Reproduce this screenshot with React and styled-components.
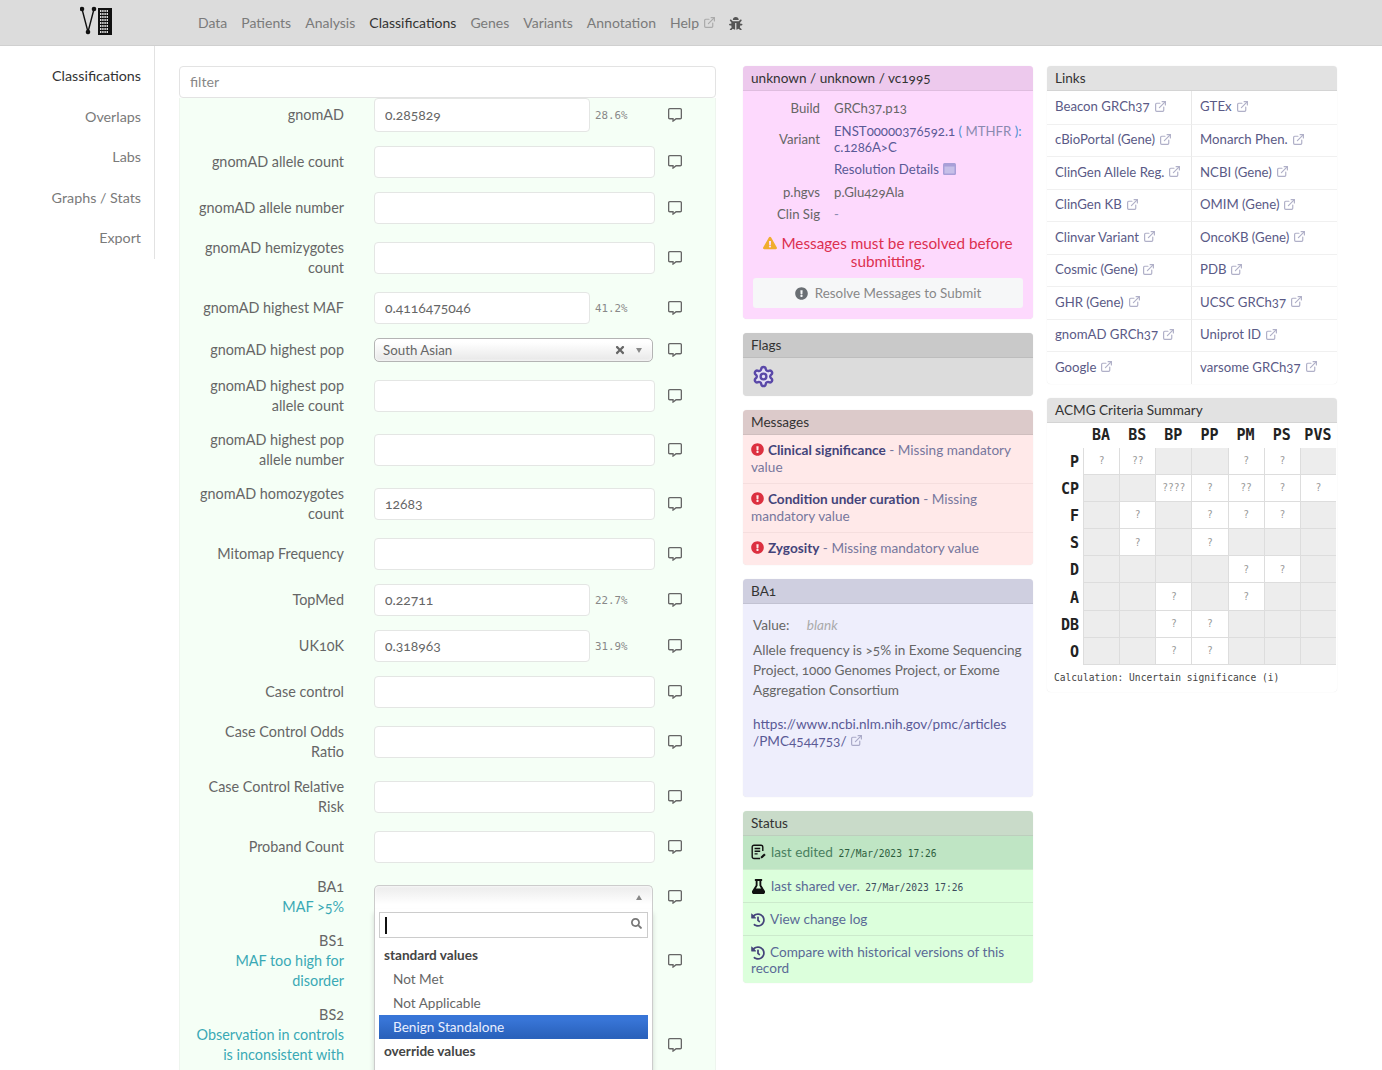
import React from 'react';
import styled, { createGlobalStyle } from 'styled-components';
import { ExternalLink, Settings } from 'lucide-react';
import { FaRegCommentAlt, FaBug, FaExclamationTriangle, FaExclamationCircle, FaFlask, FaHistory, FaSearch, FaTimes } from 'react-icons/fa';

const Global = createGlobalStyle`
  html, body { margin: 0; padding: 0; background: #fff; }
  body { font-family: Lato, "Open Sans", sans-serif; font-size: 14px; color: #666; font-variant-numeric: oldstyle-nums; font-feature-settings: "onum"; }
  * { box-sizing: border-box; }
`;

const Page = styled.div`height: 1070px; overflow: hidden; display: flex; flex-direction: column;`;
const Header = styled.header`
  height: 46px; flex: none; background: #dcdcdc; border-bottom: 1px solid #d0d0d0;
  display: flex; align-items: center; padding-left: 80px;
`;
const LogoWrap = styled.svg`width: 34px; height: 32px; margin-right: 84px; margin-top: -3px; flex: none;`;
const Nav = styled.nav`display: flex; align-items: center; gap: 14px; font-size: 14px;`;
const NavItem = styled.span`
  color: ${p => (p.$active ? '#333' : '#7a7a7a')};
  display: inline-flex; align-items: center; gap: 4px;
  svg { color: #aaa; }
`;
const BugIcon = styled(FaBug)`color: #555; font-size: 13.5px; margin: 2px 0 0 -1px;`;

const Body = styled.div`flex: 1; display: flex; min-height: 0;`;
const Side = styled.aside`
  width: 155px; height: 213px; flex: none; border-right: 1px solid #e2e2e2;
  display: flex; flex-direction: column; align-items: flex-end; padding: 20px 13px 0 0; gap: 20.5px;
`;
const SideItem = styled.div`line-height: 20px; font-size: 14.3px; color: ${p => (p.$active ? '#333' : '#7a7a7a')};`;

const Main = styled.main`
  flex: 1; display: grid; grid-template-columns: 537px 290px 290px; padding: 20px 0 0 24px; min-height: 0; align-items: start;
`;
const FormCol = styled.div``;
const Filter = styled.div`
  height: 32px; border: 1px solid #e3e3e3; border-radius: 4px; background: #fff; color: #888; padding: 0 10px 1px;
  display: flex; align-items: center; font-size: 14.2px;
`;
const FormPanel = styled.div`background: #f5fff6; border: 1px solid #eef5ee; border-top: 0; height: 1000px;`;
const Row = styled.div`
  display: grid; grid-template-columns: 164px 281px 14px; align-items: center; margin-bottom: ${p => p.$mb || 14}px;
`;
const Label = styled.div`
  text-align: right; line-height: 20px; font-size: 14.4px; color: #666; padding-bottom: ${p => p.$pb || 0}px;
`;
const Help = styled.span`color: #3aa9b5;`;
const ControlCell = styled.div`margin-left: 30px; width: 281px; display: flex; align-items: center; position: relative;`;
const Input = styled.input`
  width: ${p => (p.$short ? '216px' : '281px')}; height: ${p => p.$h || 32}px; flex: none;
  border: 1px solid #e4e6e4; border-radius: 4px; background: #fff; padding: 0 10px 1px;
  font: inherit; font-size: 13.9px; color: #666; outline: none; font-variant-numeric: oldstyle-nums; font-feature-settings: "onum";
`;
const Pct = styled.span`margin-left: 5px; font: 10.8px "DejaVu Sans Mono", monospace; color: #888;`;
const CommentBtn = styled.div`
  margin-left: 43px; width: 14px; height: 16px; color: #666; display: flex; align-items: center; justify-content: center; font-size: 14px;
`;
const Chosen = styled.div`
  width: 279px; height: 24px; flex: none; border: 1px solid #b4b4b4; border-radius: 5px;
  background: linear-gradient(#fff 15%, #eaeaea 90%); padding: 0 8px; font-size: 13.3px; color: #666;
  display: flex; align-items: center; box-shadow: 0 0 3px #fff inset;
  ${p => p.$open && `
    background: linear-gradient(#eee 10%, #fff 80%); border-color: #ccc; border-bottom: 0; border-radius: 5px 5px 0 0;
  `}
`;
const ChosenText = styled.span`flex: 1;`;
const ClearX = styled(FaTimes)`color: #666; font-size: 12px; margin-right: 10px;`;
const Arrow = styled.span`
  width: 0; height: 0; border-left: 3px solid transparent; border-right: 3px solid transparent; margin-right: 2px;
  ${p => (p.$up ? 'border-bottom: 5px solid #888;' : 'border-top: 5px solid #888;')}
`;
const Drop = styled.div`
  position: absolute; left: 0; top: 24px; width: 279px; height: 300px; background: #fff; border: 1px solid #ccc; border-top: 0;
  box-shadow: 0 4px 5px rgba(0,0,0,.15); padding: 3px 4px; z-index: 5; font-size: 13.6px; color: #666;
`;
const SearchBox = styled.div`
  height: 26px; border: 1px solid #ccc; background: #fff; display: flex; align-items: center; justify-content: space-between; padding: 0 5px;
  svg { color: #777; font-size: 11px; margin-top: -4px; }
  margin-bottom: 5px;
`;
const Caret = styled.span`display: block; width: 2px; height: 17px; background: #111;`;
const OptGroup = styled.div`height: 24px; line-height: 24px; font-weight: 700; padding-left: 5px; color: #444;`;
const Opt = styled.div`
  height: 24px; line-height: 24px; padding-left: 14px;
  ${p => p.$sel && 'background: linear-gradient(#3875d7 20%, #2a62bc 90%); color: #e8eeff;'}
`;

const RightCol = styled.div`display: flex; flex-direction: column; gap: 14px;`;
const MidCol = styled(RightCol)`margin-left: 27px; width: 290px;`;
const LinksCol = styled(RightCol)`margin-left: 41px; width: 290px;`;
const Card = styled.section`
  border-radius: 4px; overflow: hidden; background: ${p => p.$bg || '#fff'}; box-shadow: 0 0 1px rgba(0,0,0,.12);
`;
const CardHead = styled.div`
  height: 25px; background: ${p => p.$bg}; color: #333; padding: 0 8px; display: flex; align-items: center; font-size: 13.6px;
  border-bottom: 1px solid rgba(0,0,0,.06);
`;
const Facts = styled.div`display: grid; grid-template-columns: 77px 1fr; column-gap: 14px; align-items: center; padding: 9px 0 0 0; font-size: 13.2px; row-gap: 6.5px;`;
const FactLabel = styled.div`text-align: right; color: #666;`;
const FactVal = styled.div`color: ${p => (p.$link ? '#5a5a96' : '#666')}; line-height: 16px; white-space: nowrap;`;
const Mute = styled.span`color: #8a8ab0;`;
const Blue = styled.span`color: #4a8fd0;`;
const WindowGlyph = styled.svg`width: 13px; height: 12px; vertical-align: -1px; margin-left: 4px;`;
const Warn = styled.div`
  color: #dc3050; text-align: center; font-size: 15.3px; line-height: 18px; padding: 12px 10px 8px;
`;
const WarnIcon = styled(FaExclamationTriangle)`color: #f0ad2e; font-size: 14px; vertical-align: -1px; margin-right: 4px;`;
const SubmitBtn = styled.div`
  margin: 0 10px 11px; height: 30px; background: #f6f7f8; border-radius: 3px; color: #888; font-size: 13.4px;
  display: flex; align-items: center; justify-content: center; gap: 7px;
  svg { color: #6a6f74; font-size: 13px; }
`;
const FlagsBody = styled.div`height: 38px; padding: 7px 9px; color: #5a48a8; display: flex; align-items: flex-start;`;
const MsgRow = styled.div`
  padding: 7px 8px 8px; line-height: 16.5px; font-size: 13.6px; color: #77779d;
  border-top: ${p => (p.$first ? '0' : '1px solid #f5dede')};
`;
const MsgIcon = styled(FaExclamationCircle)`color: #dc3040; font-size: 13px; vertical-align: -1px; margin-right: 4px;`;
const MsgStrong = styled.strong`color: #44447a; font-weight: 700;`;
const Ba1Body = styled.div`padding: 11px 10px 0; font-size: 13.6px; line-height: 20px; color: #666; height: 193px;`;
const Blank = styled.em`color: #aaa; margin-left: 14px;`;
const Para = styled.p`margin: 5px 0 16px;`;
const ParaLink = styled.div`color: #5a5a96; line-height: 17px; svg { color: #aaaac8; vertical-align: -1px; }`;
const StatusRow = styled.div`
  padding: 8px 8px 7px; line-height: 16px; font-size: 13.6px; min-height: 33px; color: #5a6a96;
  border-top: ${p => (p.$first ? '0' : '1px solid #cceacc')};
  background: ${p => (p.$hi ? '#bfe5c4' : 'transparent')};
  ${p => p.$hi && 'color: #4a8060;'}
`;
const Stamp = styled.span`font: 9.6px "DejaVu Sans Mono", monospace; color: #3d4d5d; margin-left: 2px; ${p => p.$hi && 'color:#2d5d3d;'}`;
const StatusIcon = styled.span`display: inline-flex; vertical-align: -3px; margin-right: 5px; color: ${p => p.$c || '#44447a'}; font-size: ${p => p.$size || 14}px;`;

const LinksGrid = styled.div`display: grid; grid-template-columns: 145px 145px;`;
const LinkCell = styled.div`
  height: 32.5px; display: flex; align-items: center; padding: 0 8px 2px; gap: 4px; color: #5a5a86; font-size: 13.2px;
  border-top: ${p => (p.$top ? '0' : '1px solid #f0f0f0')};
  border-right: ${p => (p.$left ? '1px solid #e8e8e8' : '0')};
  svg { color: #b0b0c8; flex: none; }
`;

const Acmg = styled.div`
  display: grid; grid-template-columns: 36px repeat(7, 36.15px); grid-template-rows: 25px repeat(8, 27.2px);
  font-family: "DejaVu Sans Mono", monospace;
`;
const AcmgHead = styled.div`font-weight: 700; font-size: 15px; color: #222; display: flex; align-items: center; justify-content: center;`;
const AcmgRowLabel = styled(AcmgHead)`justify-content: flex-end; padding: 1px 4px 0 0;`;
const AcmgCell = styled.div`
  font-size: 9.6px; color: #999; display: flex; align-items: center; justify-content: center;
  background: ${p => (p.$empty ? '#ededed' : '#fff')}; border-left: 1px solid #ddd; border-bottom: 1px solid #ddd;
`;
const Calc = styled.div`font: 9.6px "DejaVu Sans Mono", monospace; color: #444; padding: 6px 7px 7px; line-height: 14px;`;

const Ext = () => <ExternalLink size={13} strokeWidth={2.2} />;
const Comment = () => <CommentBtn><FaRegCommentAlt /></CommentBtn>;

const rows = [
  { l: ['gnomAD'], v: '0.285829', pct: '28.6%', h: 34 },
  { l: ['gnomAD allele count'] },
  { l: ['gnomAD allele number'] },
  { l: ['gnomAD hemizygotes', 'count'] },
  { l: ['gnomAD highest MAF'], v: '0.4116475046', pct: '41.2%' },
  { l: ['gnomAD highest pop'], select: 'South Asian' },
  { l: ['gnomAD highest pop', 'allele count'] },
  { l: ['gnomAD highest pop', 'allele number'] },
  { l: ['gnomAD homozygotes', 'count'], v: '12683' },
  { l: ['Mitomap Frequency'] },
  { l: ['TopMed'], v: '0.22711', pct: '22.7%' },
  { l: ['UK10K'], v: '0.318963', pct: '31.9%' },
  { l: ['Case control'] },
  { l: ['Case Control Odds', 'Ratio'], mb: 15 },
  { l: ['Case Control Relative', 'Risk'] },
  { l: ['Proband Count'] },
];

const links = [
  ['Beacon GRCh37', 'GTEx'], ['cBioPortal (Gene)', 'Monarch Phen.'], ['ClinGen Allele Reg.', 'NCBI (Gene)'],
  ['ClinGen KB', 'OMIM (Gene)'], ['Clinvar Variant', 'OncoKB (Gene)'], ['Cosmic (Gene)', 'PDB'],
  ['GHR (Gene)', 'UCSC GRCh37'], ['gnomAD GRCh37', 'Uniprot ID'], ['Google', 'varsome GRCh37'],
];

const acmgCols = ['BA', 'BS', 'BP', 'PP', 'PM', 'PS', 'PVS'];
const acmg = [
  ['P', ['?', '??', '', '', '?', '?', '']],
  ['CP', ['', '', '????', '?', '??', '?', '?']],
  ['F', ['', '?', '', '?', '?', '?', '']],
  ['S', ['', '?', '', '?', '', '', '']],
  ['D', ['', '', '', '', '?', '?', '']],
  ['A', ['', '', '?', '', '?', '', '']],
  ['DB', ['', '', '?', '?', '', '', '']],
  ['O', ['', '', '?', '?', '', '', '']],
];

const Logo = () => {
  const xs = [0, 1, 2, 3, 4];
  const ys = [0, 1, 2, 3, 4, 5, 6, 7];
  return (
    <LogoWrap viewBox="0 0 34 32">
      <path d="M2 4 L8 27 L14 4" fill="none" stroke="#111" strokeWidth="1.4" />
      <circle cx="2" cy="4" r="2.3" fill="#111" />
      <circle cx="14" cy="4" r="2.3" fill="#111" />
      <circle cx="8" cy="27" r="2.3" fill="#111" />
      <rect x="18" y="3" width="14" height="27" fill="#111" />
      {xs.flatMap(x => ys.map(y => (
        (x < 4 || y > 3) && <rect key={x + '-' + y} x={20 + x * 2.2} y={5 + y * 3} width="1.4" height="2" fill={x === 4 ? '#111' : '#ddd'} />
      )))}
    </LogoWrap>
  );
};

const EditDoc = () => (
  <svg width="15" height="16" viewBox="0 0 15 16" fill="none" stroke="#111" strokeWidth="1.4">
    <path d="M9 14.5H3a1.8 1.8 0 0 1-1.8-1.8V3A1.8 1.8 0 0 1 3 1.2h7A1.8 1.8 0 0 1 11.8 3v4" />
    <path d="M3.6 4.5h5.6M3.6 7.2h5.6M3.6 9.9h3" />
    <path d="M9.5 14.6l.5-2 3.2-3.2 1.5 1.5-3.2 3.2z" fill="#111" stroke="none" />
  </svg>
);

export default function App() {
  return (
    <Page>
      <Global />
      <Header>
        <Logo />
        <Nav>
          <NavItem>Data</NavItem>
          <NavItem>Patients</NavItem>
          <NavItem>Analysis</NavItem>
          <NavItem $active>Classifications</NavItem>
          <NavItem>Genes</NavItem>
          <NavItem>Variants</NavItem>
          <NavItem>Annotation</NavItem>
          <NavItem>Help <Ext /></NavItem>
          <BugIcon />
        </Nav>
      </Header>
      <Body>
        <Side>
          <SideItem $active>Classifications</SideItem>
          <SideItem>Overlaps</SideItem>
          <SideItem>Labs</SideItem>
          <SideItem>Graphs / Stats</SideItem>
          <SideItem>Export</SideItem>
        </Side>
        <Main>
          <FormCol>
            <Filter>filter</Filter>
            <FormPanel>
              {rows.map(r => (
                <Row key={r.l.join()} $mb={r.mb}>
                  <Label>{r.l.map((t, i) => <React.Fragment key={t}>{i > 0 && <br />}{t}</React.Fragment>)}</Label>
                  <ControlCell>
                    {r.select ? (
                      <Chosen>
                        <ChosenText>{r.select}</ChosenText>
                        <ClearX />
                        <Arrow />
                      </Chosen>
                    ) : (
                      <>
                        <Input readOnly value={r.v || ''} $short={!!r.pct} $h={r.h} />
                        {r.pct && <Pct>{r.pct}</Pct>}
                      </>
                    )}
                  </ControlCell>
                  <Comment />
                </Row>
              ))}
              <Row>
                <Label>BA1<br /><Help>MAF &gt;5%</Help></Label>
                <ControlCell>
                  <Chosen $open>
                    <ChosenText />
                    <Arrow $up />
                  </Chosen>
                  <Drop>
                    <SearchBox><Caret /><FaSearch /></SearchBox>
                    <OptGroup>standard values</OptGroup>
                    <Opt>Not Met</Opt>
                    <Opt>Not Applicable</Opt>
                    <Opt $sel>Benign Standalone</Opt>
                    <OptGroup>override values</OptGroup>
                  </Drop>
                </ControlCell>
                <Comment />
              </Row>
              <Row>
                <Label>BS1<br /><Help>MAF too high for<br />disorder</Help></Label>
                <ControlCell />
                <Comment />
              </Row>
              <Row>
                <Label $pb={20}>BS2<br /><Help>Observation in controls<br />is inconsistent with</Help></Label>
                <ControlCell />
                <Comment />
              </Row>
            </FormPanel>
          </FormCol>

          <MidCol>
            <Card $bg="#fdd9fd">
              <CardHead $bg="#edc9ed">unknown / unknown / vc1995</CardHead>
              <Facts>
                <FactLabel>Build</FactLabel><FactVal>GRCh37.p13</FactVal>
                <FactLabel>Variant</FactLabel>
                <FactVal $link>ENST00000376592.1 <Blue>(</Blue> <Mute>MTHFR</Mute> <Blue>):</Blue><br />c.1286A&gt;C</FactVal>
                <span />
                <FactVal $link>Resolution Details
                  <WindowGlyph viewBox="0 0 13 12"><rect width="13" height="12" rx="1.5" fill="#a99fd8" /><rect x="1.5" y="3.5" width="10" height="7" fill="#c6bfe8" /></WindowGlyph>
                </FactVal>
                <FactLabel>p.hgvs</FactLabel><FactVal>p.Glu429Ala</FactVal>
                <FactLabel>Clin Sig</FactLabel><FactVal><Mute>-</Mute></FactVal>
              </Facts>
              <Warn><WarnIcon />Messages must be resolved before submitting.</Warn>
              <SubmitBtn><FaExclamationCircle /> Resolve Messages to Submit</SubmitBtn>
            </Card>
            <Card $bg="#dcdcdc">
              <CardHead $bg="#c9c9c9">Flags</CardHead>
              <FlagsBody><Settings size={23} strokeWidth={2.5} fill="#e4e0f4" /></FlagsBody>
            </Card>
            <Card $bg="#ffe9e9">
              <CardHead $bg="#dccaca">Messages</CardHead>
              <MsgRow $first><MsgIcon /><MsgStrong>Clinical significance</MsgStrong> - Missing mandatory value</MsgRow>
              <MsgRow><MsgIcon /><MsgStrong>Condition under curation</MsgStrong> - Missing mandatory value</MsgRow>
              <MsgRow><MsgIcon /><MsgStrong>Zygosity</MsgStrong> - Missing mandatory value</MsgRow>
            </Card>
            <Card $bg="#eeeefc">
              <CardHead $bg="#cfcfe0">BA1</CardHead>
              <Ba1Body>
                Value: <Blank>blank</Blank>
                <Para>Allele frequency is &gt;5% in Exome Sequencing Project, 1000 Genomes Project, or Exome Aggregation Consortium</Para>
                <ParaLink>https://www.ncbi.nlm.nih.gov/pmc/articles<br />/PMC4544753/ <Ext /></ParaLink>
              </Ba1Body>
            </Card>
            <Card $bg="#dcffdc">
              <CardHead $bg="#c9dbc9">Status</CardHead>
              <StatusRow $first $hi><StatusIcon><EditDoc /></StatusIcon>last edited <Stamp $hi>27/Mar/2023 17:26</Stamp></StatusRow>
              <StatusRow><StatusIcon $c="#111" $size={15}><FaFlask /></StatusIcon>last shared ver. <Stamp>27/Mar/2023 17:26</Stamp></StatusRow>
              <StatusRow><StatusIcon><FaHistory /></StatusIcon>View change log</StatusRow>
              <StatusRow><StatusIcon><FaHistory /></StatusIcon>Compare with historical versions of this record</StatusRow>
            </Card>
          </MidCol>

          <LinksCol>
            <Card $bg="#fff">
              <CardHead $bg="#e2e2e2">Links</CardHead>
              <LinksGrid>
                {links.flatMap((pair, i) => pair.map((t, j) => (
                  <LinkCell key={t} $top={i === 0} $left={j === 0}>{t} <Ext /></LinkCell>
                )))}
              </LinksGrid>
            </Card>
            <Card $bg="#fff">
              <CardHead $bg="#e2e2e2">ACMG Criteria Summary</CardHead>
              <Acmg>
                <AcmgHead />
                {acmgCols.map(c => <AcmgHead key={c}>{c}</AcmgHead>)}
                {acmg.map(([name, cells]) => (
                  <React.Fragment key={name}>
                    <AcmgRowLabel>{name}</AcmgRowLabel>
                    {cells.map((c, i) => <AcmgCell key={i} $empty={!c}>{c}</AcmgCell>)}
                  </React.Fragment>
                ))}
              </Acmg>
              <Calc>Calculation: Uncertain significance (i)</Calc>
            </Card>
          </LinksCol>
        </Main>
      </Body>
    </Page>
  );
}
